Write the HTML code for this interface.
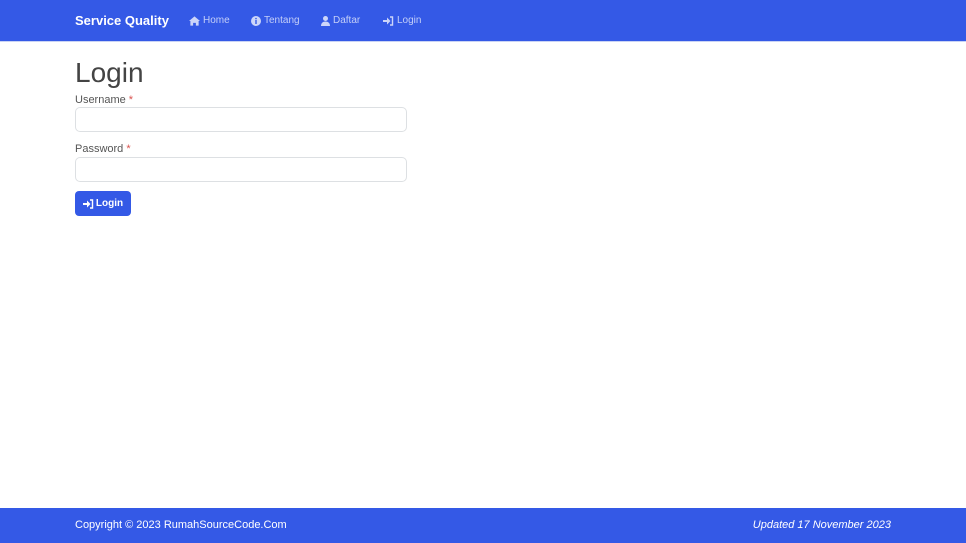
<!DOCTYPE html>
<html><head><meta charset="utf-8"><style>
*{box-sizing:border-box;margin:0;padding:0}
body{width:966px;height:543px;position:relative;font-family:"Liberation Sans",sans-serif;background:#fff;color:#373a3c;overflow:hidden}
.nav{position:absolute;left:0;top:0;width:966px;height:42px;background:#3459e6;border-bottom:1px solid #c9d3f5}
.brand{position:absolute;left:75px;top:13px;color:#fff;font-size:13px;font-weight:bold}
.nl{position:absolute;top:15px;color:rgba(255,255,255,.7);font-size:10px;display:flex;align-items:center;gap:3px}
.nl svg{fill:rgba(255,255,255,.75)}
h1{position:absolute;left:75px;top:57px;font-size:28px;font-weight:normal;color:#444}
label{position:absolute;left:75px;font-size:11px;color:#555}
label b{color:#d9534f;font-weight:normal}
.in{position:absolute;left:75px;width:332px;height:25px;border:1px solid #dde0e3;border-radius:5px}
.btn{position:absolute;left:75px;top:191px;width:56px;height:25px;background:#3459e6;border-radius:4px;color:#fff;font-size:10px;font-weight:bold;display:flex;align-items:center;justify-content:center;gap:2px}
.foot{position:absolute;left:0;top:508px;width:966px;height:35px;background:#3459e6;color:#fff;font-size:11px}
</style></head><body>
<div class="nav">
<div class="brand">Service Quality</div>
<div class="nl" style="left:189px"><svg width="11" height="10" viewBox="0 0 12 10"><path d="M6 0L0 5h1.5v5h3V7h3v3h3V5H12z"/></svg>Home</div>
<div class="nl" style="left:251px"><svg width="10" height="10" viewBox="0 0 10 10"><circle cx="5" cy="5" r="5"/><rect x="4.3" y="4" width="1.4" height="4" fill="#3459e6"/><circle cx="5" cy="2.6" r=".8" fill="#3459e6"/></svg>Tentang</div>
<div class="nl" style="left:321px"><svg width="9" height="10" viewBox="0 0 9 10"><circle cx="4.5" cy="2.5" r="2.5"/><path d="M0 10c0-3 2-4.5 4.5-4.5S9 7 9 10z"/></svg>Daftar</div>
<div class="nl" style="left:383px"><svg width="11" height="10" viewBox="0 0 11 10"><path d="M0 4h4V1.5L7.5 5 4 8.5V6H0z"/><path d="M7 1h2.5v8H7" fill="none" stroke="rgba(255,255,255,.75)" stroke-width="1.4"/></svg>Login</div>
</div>
<h1>Login</h1>
<label style="top:94px">Username <b>*</b></label>
<div class="in" style="top:107px"></div>
<label style="top:143px">Password <b>*</b></label>
<div class="in" style="top:157px"></div>
<div class="btn"><svg width="11" height="10" viewBox="0 0 11 10"><path d="M0 4h4V1.5L7.5 5 4 8.5V6H0z" fill="#fff"/><path d="M7 1h2.5v8H7" fill="none" stroke="#fff" stroke-width="1.4"/></svg>Login</div>
<div class="foot"><span style="position:absolute;left:75px;top:11px">Copyright © 2023 RumahSourceCode.Com</span><span style="position:absolute;right:75px;top:11px;font-style:italic">Updated 17 November 2023</span></div>
</body></html>
